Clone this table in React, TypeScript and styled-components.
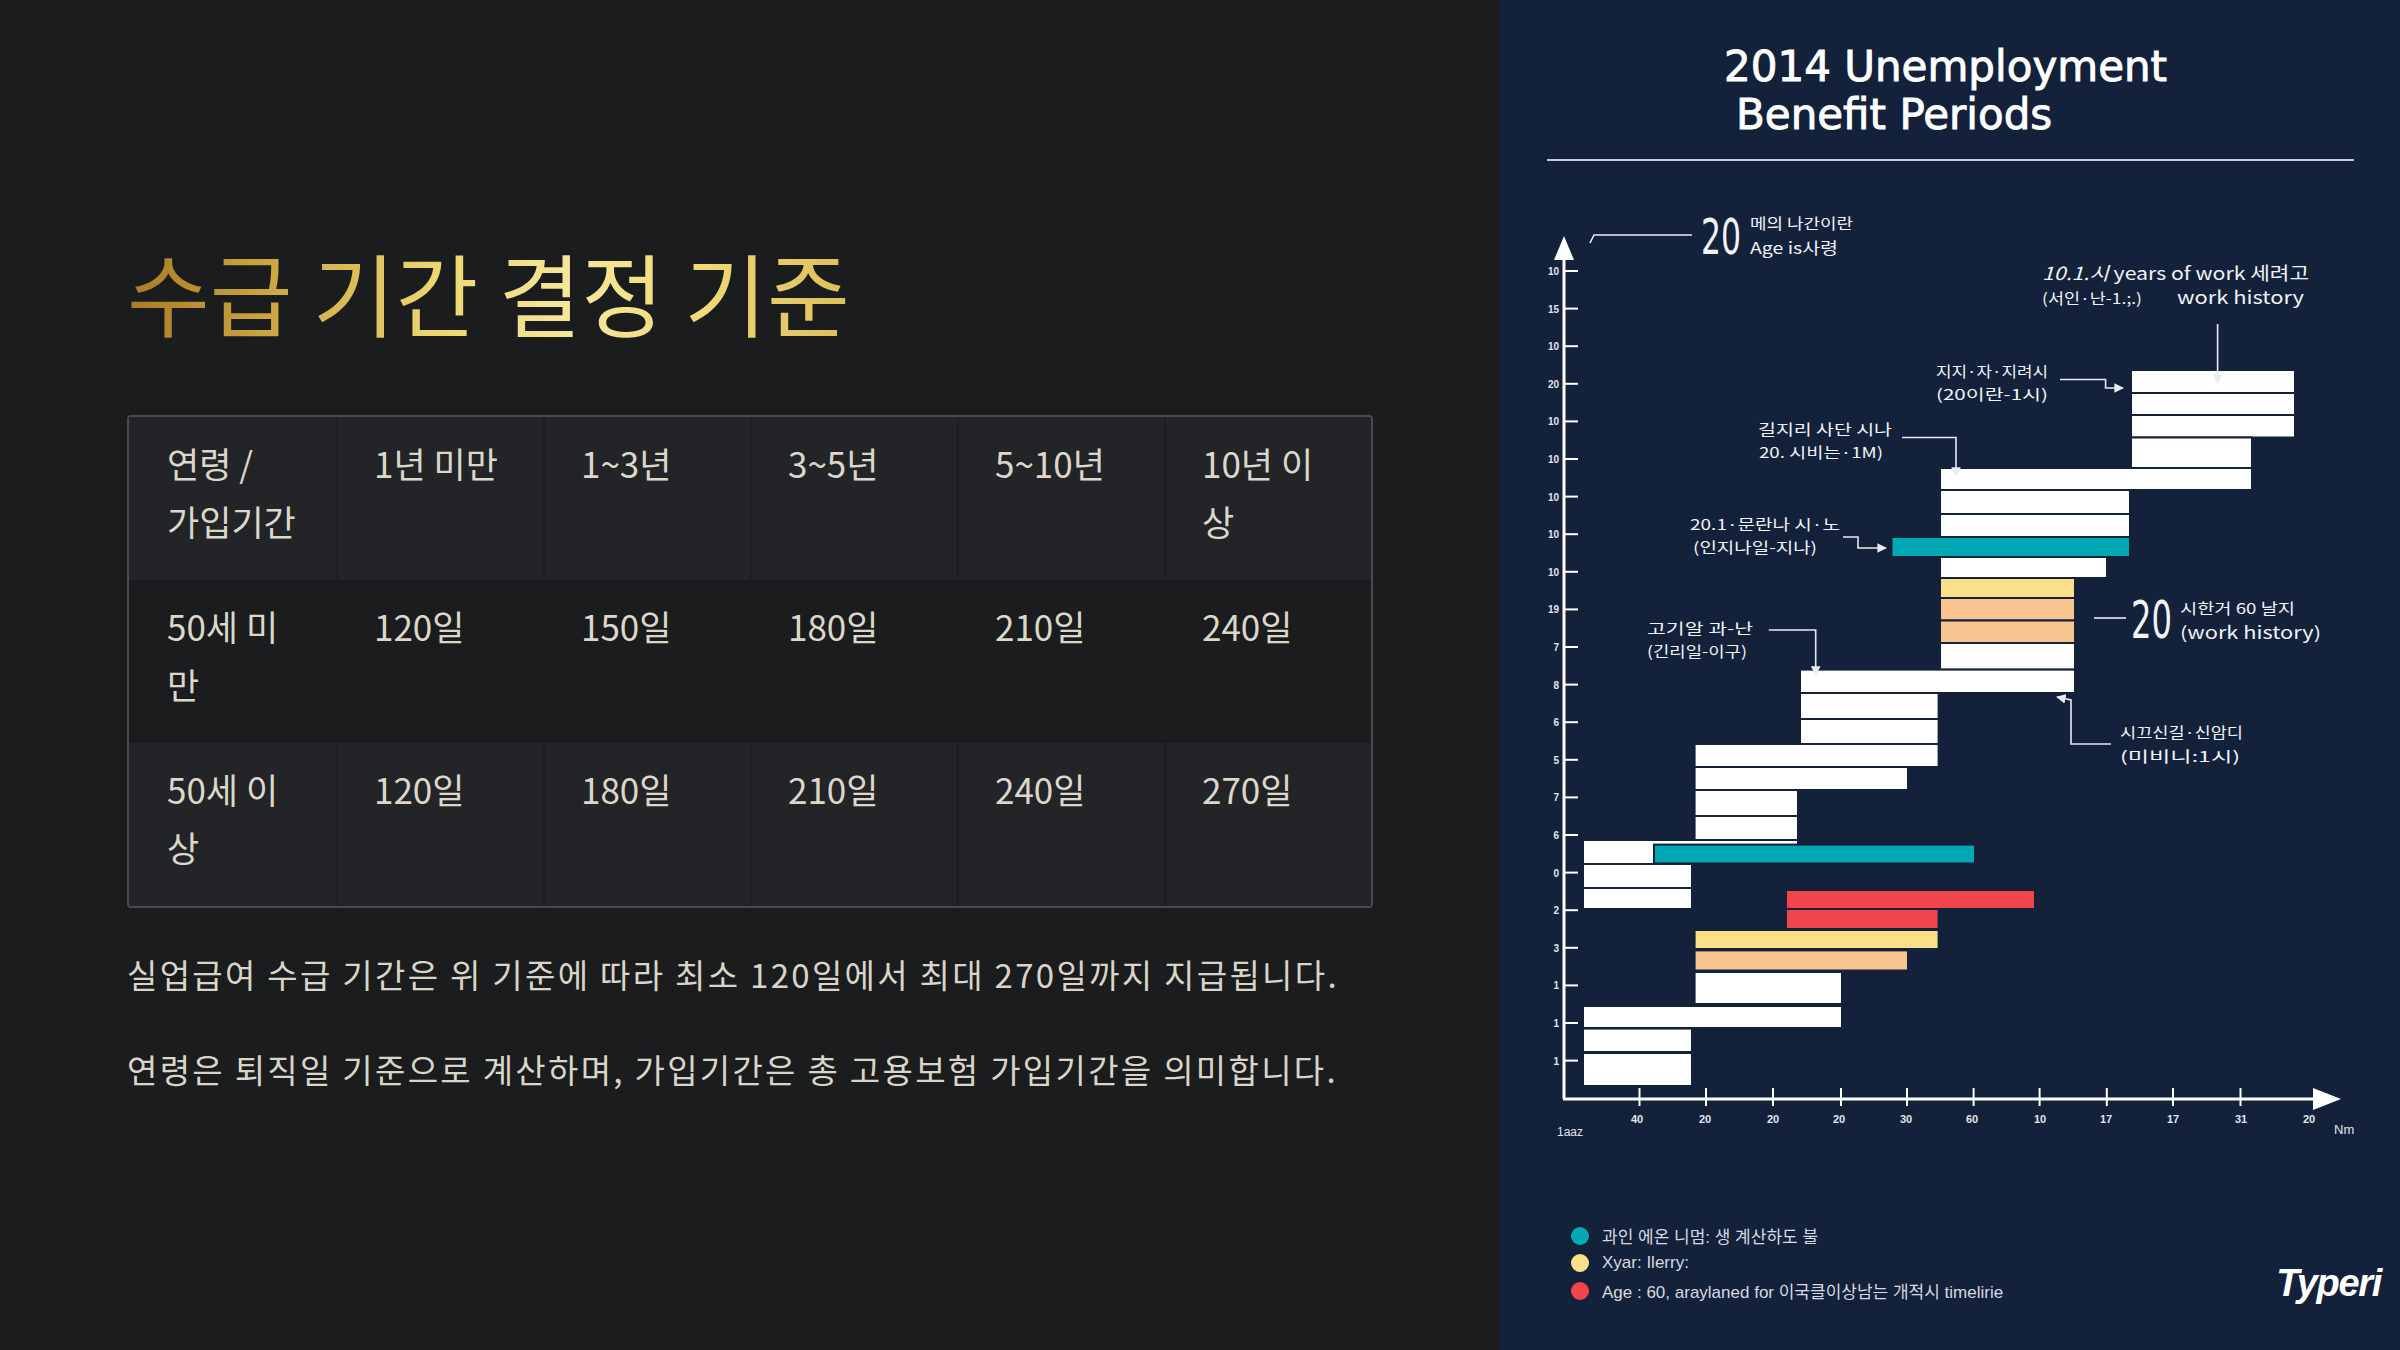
import React from "react";
import styled, { createGlobalStyle } from "styled-components";

const Global = createGlobalStyle`
  html, body { margin: 0; padding: 0; background: #1b1c1e; }
  * { box-sizing: border-box; }
`;

const Page = styled.div`
  display: flex;
  width: 2400px;
  height: 1350px;
  overflow: hidden;
`;

const LeftPanel = styled.section`
  width: 1500px;
  height: 100%;
  background: #1b1c1e;
  padding: 240px 0 0 127px;
  font-family: "Noto Sans CJK KR", "Noto Sans", sans-serif;
`;

const Title = styled.h1`
  margin: 0;
  font-size: 90px;
  line-height: 102px;
  font-weight: 400;
  display: inline-block;
  background: linear-gradient(90deg, #a97b25 0%, #c9a23f 18%, #ead56e 42%, #f6e79c 62%, #efd877 80%, #dcbf5c 100%);
  -webkit-background-clip: text;
  background-clip: text;
  color: transparent;
`;

const Table = styled.div`
  margin-top: 73px;
  width: 1246px;
  display: grid;
  grid-template-columns: repeat(6, 1fr);
  border: 2px solid #4a4a4d;
  border-radius: 4px;
  overflow: hidden;
`;

const Cell = styled.div<{ $shade: boolean; $first: boolean; $keep?: boolean }>`
  height: 163px;
  padding: 17px 35px 0 ${(p) => (p.$first ? 38 : 36)}px;
  background: ${(p) => (p.$shade ? "#232427" : "#1b1c1e")};
  border-left: ${(p) => (p.$first ? "none" : p.$shade ? "2px solid #1d1e20" : "2px solid #1b1c1e")};
  color: #dcd7cb;
  font-size: 35px;
  line-height: 58px;
  word-break: ${(p) => (p.$keep ? "keep-all" : "normal")};
`;

const Note = styled.p<{ $gap: number }>`
  margin: ${(p) => p.$gap}px 0 0;
  font-size: 33px;
  line-height: 48px;
  letter-spacing: 2.3px;
  color: #d9d5c9;
`;

const RightPanel = styled.section`
  width: 900px;
  height: 100%;
  background: #14213b;
  display: flex;
  flex-direction: column;
`;

const ChartTitle = styled.h2`
  margin: 43px 0 0;
  padding-left: 224px;
  font-family: "DejaVu Sans", sans-serif;
  font-size: 42px;
  line-height: 48px;
  font-weight: 400;
  color: #ffffff;
  -webkit-text-stroke: 0.9px #ffffff;
`;

const TitleLine = styled.span<{ $indent: number }>`
  display: block;
  margin-left: ${(p) => p.$indent}px;
`;

const Rule = styled.div`
  margin: 20px 46px 0 47px;
  height: 2px;
  background: #c3c9d3;
`;

const ChartSvg = styled.svg`
  display: block;
  width: 900px;
  height: 1039px;
`;

const Footer = styled.div`
  margin-top: 22px;
  padding: 0 19px 0 71px;
  display: flex;
  justify-content: space-between;
  align-items: flex-end;
`;

const Legend = styled.ul`
  margin: 0;
  padding: 0;
  list-style: none;
  display: flex;
  flex-direction: column;
`;

const LegendItem = styled.li`
  display: flex;
  align-items: center;
  gap: 13px;
  height: 27.5px;
  font-family: "Liberation Sans", "Noto Sans CJK KR", sans-serif;
  font-size: 17px;
  color: #d6dae1;
`;

const Dot = styled.span<{ $color: string }>`
  width: 18px;
  height: 18px;
  border-radius: 50%;
  background: ${(p) => p.$color};
  flex: none;
`;

const Logo = styled.div`
  margin-bottom: 3px;
  font-family: "Liberation Sans", sans-serif;
  font-weight: 700;
  font-style: italic;
  font-size: 38px;
  line-height: 38px;
  letter-spacing: -1.3px;
  color: #ffffff;
`;

const header = ["연령 / 가입기간", "1년 미만", "1~3년", "3~5년", "5~10년", "10년 이상"];
const rows = [
  ["50세 미만", "120일", "150일", "180일", "210일", "240일"],
  ["50세 이상", "120일", "180일", "210일", "240일", "270일"],
];

const W = "#ffffff";
const TEAL = "#00a8b6";
const YEL = "#fbe08a";
const ORG = "#f8c591";
const RED = "#f1444b";

const bars: [number, number, number, number, string][] = [
  [2131, 2295, 370, 393, W],
  [2131, 2295, 393, 415, W],
  [2131, 2295, 415, 437.5, W],
  [2131, 2252, 437.5, 468, W],
  [1940, 2252, 468, 490, W],
  [1940, 2130, 490, 514, W],
  [1940, 2130, 514, 537, W],
  [1891.5, 2130, 537, 557, TEAL],
  [1940, 2107, 557, 578, W],
  [1940, 2075, 578, 598, YEL],
  [1940, 2075, 598, 620.5, ORG],
  [1940, 2075, 620.5, 643, ORG],
  [1940, 2075, 643, 669.6, W],
  [1800, 2075, 669.6, 693, W],
  [1800, 1938.6, 693, 719, W],
  [1800, 1938.6, 719, 744, W],
  [1694.6, 1938.6, 744, 767, W],
  [1694.6, 1908, 767, 790, W],
  [1694.6, 1798, 790, 816, W],
  [1694.6, 1798, 816, 840, W],
  [1583, 1798, 840, 864, W],
  [1654, 1975, 844.6, 863.4, TEAL],
  [1583, 1692, 864, 888, W],
  [1583, 1692, 888, 909, W],
  [1786, 2035, 890, 909, RED],
  [1786, 1938.6, 909, 929, RED],
  [1694.6, 1938.6, 930, 949, YEL],
  [1694.6, 1908, 950.4, 970.5, ORG],
  [1694.6, 1842, 972, 1004, W],
  [1583, 1842, 1006, 1028, W],
  [1583, 1692, 1028.6, 1052, W],
  [1583, 1692, 1053, 1086, W],
];

const yLabels = ["10", "15", "10", "20", "10", "10", "10", "10", "10", "19", "7", "8", "6", "5", "7", "6", "0", "2", "3", "1", "1", "1"];
const xTicks = [1639.5, 1706, 1773, 1841, 1907, 1973.6, 2039.6, 2106.8, 2173, 2240.5];
const xLabels: [number, string][] = [
  [1637, "40"], [1705, "20"], [1773, "20"], [1839, "20"], [1906, "30"], [1972, "60"],
  [2040, "10"], [2106, "17"], [2173, "17"], [2241, "31"], [2309, "20"],
];

type Ann = { x: number; y: number; t: string; len: number; size?: number };
const annotations: Ann[] = [
  { x: 1750, y: 229, t: "메의 나간이란", len: 103, size: 15 },
  { x: 1750, y: 254, t: "Age is사령", len: 88, size: 16 },
  { x: 2042, y: 304, t: "(서인·난-1.;.)", len: 100, size: 15 },
  { x: 2177, y: 304, t: "work history", len: 127, size: 18 },
  { x: 1936, y: 377, t: "지지·자·지려시", len: 112 },
  { x: 1936, y: 400, t: "(20이란-1시)", len: 112 },
  { x: 1758, y: 435, t: "길지리 사단 시나", len: 134 },
  { x: 1759, y: 458, t: "20. 시비는·1M)", len: 124 },
  { x: 1690, y: 530, t: "20.1·문란나 시·노", len: 150 },
  { x: 1693, y: 553, t: "(인지나일-지나)", len: 124 },
  { x: 2180, y: 614, t: "시한거 60 날지", len: 115 },
  { x: 2180, y: 639, t: "(work history)", len: 141, size: 17 },
  { x: 1647, y: 634, t: "고기알 과-난", len: 106 },
  { x: 1647, y: 657, t: "(긴리일-이구)", len: 100 },
  { x: 2120, y: 738, t: "시끄신길·신암디", len: 123 },
  { x: 2120, y: 762, t: "(미비니:1시)", len: 120 },
];

const leaders: string[] = [
  "1590,243 1594,235 1692,235",
  "2217.6,324 2217.6,383",
  "2060,379.5 2105.6,379.5 2105.6,388 2123,388",
  "1902,437.5 1956,437.5 1956,476",
  "1843,537 1858,537 1858,548 1886,548",
  "2094,618 2126,618",
  "1768.7,630 1815.7,630 1815.7,675",
  "2111,744 2071,744 2071,700 2057,697",
];

const Chart: React.FC = () => (
  <ChartSvg viewBox="1500 161 900 1039">
    <defs>
      <marker id="ah" viewBox="0 0 10 10" refX="9" refY="5" markerWidth="6" markerHeight="6" orient="auto">
        <path d="M0,0 L10,5 L0,10 z" fill="#e8ebf0" />
      </marker>
    </defs>
    <line x1={1564} y1={250} x2={1564} y2={1099} stroke="#fff" strokeWidth={3} />
    <polygon points="1564,236 1554,260 1574,260" fill="#fff" />
    <line x1={1563} y1={1099} x2={2320} y2={1099} stroke="#fff" strokeWidth={3} />
    <polygon points="2341,1099 2313,1088 2313,1110" fill="#fff" />
    {yLabels.map((l, i) => {
      const y = 271 + i * 37.6;
      return (
        <g key={i}>
          <line x1={1564} y1={y} x2={1578} y2={y} stroke="#fff" strokeWidth={2} />
          <text x={1559} y={y + 4} textAnchor="end" fontSize={10} fontWeight={700} fill="#e2e6ec" fontFamily="'Liberation Sans',sans-serif">
            {l}
          </text>
        </g>
      );
    })}
    {xTicks.map((x, i) => (
      <line key={i} x1={x} y1={1088} x2={x} y2={1106} stroke="#fff" strokeWidth={2} />
    ))}
    {xLabels.map(([x, l], i) => (
      <text key={i} x={x} y={1123} textAnchor="middle" fontSize={11} fontWeight={700} fill="#e2e6ec" fontFamily="'Liberation Sans',sans-serif">
        {l}
      </text>
    ))}
    <text x={1557} y={1136} fontSize={12} fill="#e2e6ec" fontFamily="'Liberation Sans',sans-serif">1aaz</text>
    <text x={2334} y={1134} fontSize={13} fill="#e2e6ec" fontFamily="'Liberation Sans',sans-serif">Nm</text>

    {bars.map(([x1, x2, y1, y2, c], i) => (
      <rect key={i} x={x1} y={y1} width={x2 - x1} height={y2 - y1} fill={c} stroke="#14213b" strokeWidth={2} />
    ))}

    {leaders.map((pts, i) => (
      <polyline key={i} points={pts} fill="none" stroke="#e8ebf0" strokeWidth={1.6} markerEnd={i === 0 || i === 5 ? undefined : "url(#ah)"} />
    ))}

    <g fill="#f1f3f6" fontFamily="'Noto Sans CJK KR','DejaVu Sans',sans-serif">
      <text transform="translate(1701,254) scale(0.63,1)" fontSize={50} fontFamily="'DejaVu Sans',sans-serif">20</text>
      <text transform="translate(2131,638) scale(0.62,1)" fontSize={52} fontFamily="'DejaVu Sans',sans-serif">20</text>
      <text x={2042} y={280} fontSize={18} textLength={267} lengthAdjust="spacingAndGlyphs">
        <tspan fontStyle="italic">10.1.시</tspan> years of work 세려고
      </text>
      {annotations.map((a, i) => (
        <text key={i} x={a.x} y={a.y} fontSize={a.size ?? 15} textLength={a.len} lengthAdjust="spacingAndGlyphs">
          {a.t}
        </text>
      ))}
    </g>
  </ChartSvg>
);

export default function App() {
  return (
    <Page>
      <Global />
      <LeftPanel>
        <Title>수급 기간 결정 기준</Title>
        <Table>
          {header.map((h, i) => (
            <Cell key={`h${i}`} $shade={true} $first={i === 0} $keep={i === 0}>{h}</Cell>
          ))}
          {rows.map((r, ri) =>
            r.map((c, ci) => (
              <Cell key={`${ri}-${ci}`} $shade={ri === 1} $first={ci === 0}>{c}</Cell>
            ))
          )}
        </Table>
        <Note $gap={42}>실업급여 수급 기간은 위 기준에 따라 최소 120일에서 최대 270일까지 지급됩니다.</Note>
        <Note $gap={47}>연령은 퇴직일 기준으로 계산하며, 가입기간은 총 고용보험 가입기간을 의미합니다.</Note>
      </LeftPanel>
      <RightPanel>
        <ChartTitle>
          <TitleLine $indent={0}>2014 Unemployment</TitleLine>
          <TitleLine $indent={12}>Benefit Periods</TitleLine>
        </ChartTitle>
        <Rule />
        <Chart />
        <Footer>
          <Legend>
            <LegendItem><Dot $color="#00a8b6" />과인 에온 니멈: 생 계산하도 불</LegendItem>
            <LegendItem><Dot $color="#fbe08a" />Xyar: Ilerry:</LegendItem>
            <LegendItem><Dot $color="#f1444b" />Age : 60, araylaned for 이국클이상남는 개적시 timelirie</LegendItem>
          </Legend>
          <Logo>Typeri</Logo>
        </Footer>
      </RightPanel>
    </Page>
  );
}
